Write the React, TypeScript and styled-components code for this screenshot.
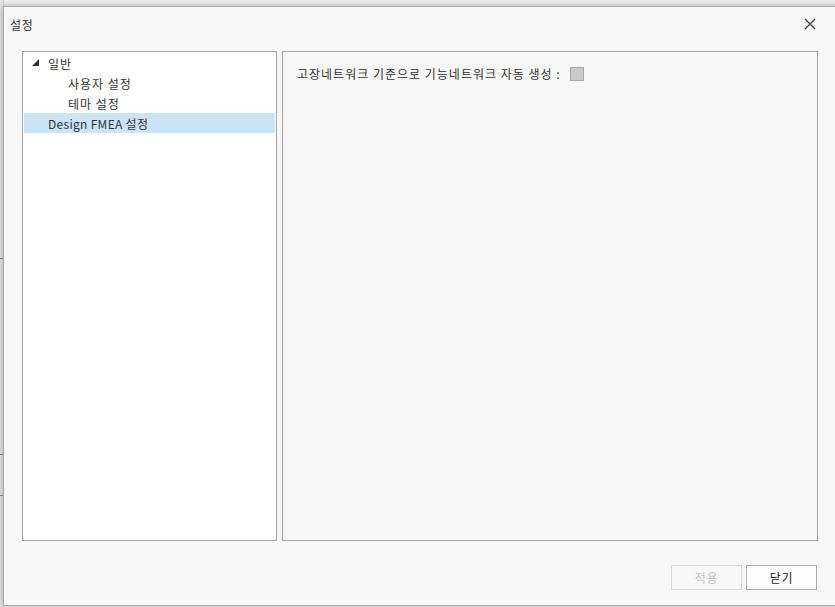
import React from "react";
import styled, { createGlobalStyle } from "styled-components";

const Global = createGlobalStyle`
  html, body { margin: 0; padding: 0; }
  body {
    background: #ececec;
    overflow: hidden;
    width: 835px;
    height: 607px;
    font-family: "Noto Sans CJK KR", "Noto Sans", sans-serif;
    font-size: 12px;
    color: #333;
  }
`;

const Page = styled.div`
  position: relative;
  width: 835px;
  height: 607px;
  overflow: hidden;
  padding: 6px 0 0 3px;
  box-sizing: border-box;
`;

const BackStrip = styled.div`
  position: absolute;
  left: 0;
  top: 0;
  width: 3px;
  height: 607px;
  background: #e4e4e4;
  border-right: 1px solid #c8c8c8;
`;

const BackLine = styled.div<{ $top: number }>`
  position: absolute;
  left: 0;
  top: ${(p) => p.$top}px;
  width: 3px;
  height: 1px;
  background: #888;
`;

const Window = styled.div`
  position: relative;
  width: 840px;
  height: 600px;
  box-sizing: border-box;
  background: #f8f8f8;
  border: 1px solid #a9a9a9;
  box-shadow: 0 0 6px rgba(0, 0, 0, 0.28);
  display: flex;
  flex-direction: column;
`;

const TitleBar = styled.div`
  height: 33px;
  display: flex;
  align-items: center;
  justify-content: space-between;
  padding: 0 18px 0 6px;
  width: 831px;
  box-sizing: border-box;
`;

const Title = styled.span`
  font-size: 12px;
  color: #333;
  margin-top: 1px;
  letter-spacing: 0.6px;
`;

const CloseButton = styled.button`
  border: none;
  background: transparent;
  padding: 0;
  width: 14px;
  height: 14px;
  display: flex;
  align-items: center;
  justify-content: center;
  cursor: pointer;
`;

const Body = styled.div`
  display: flex;
  gap: 5px;
  padding: 11px 0 0 18px;
`;

const Panel = styled.div<{ $width: number; $bg: string }>`
  width: ${(p) => p.$width}px;
  height: 490px;
  box-sizing: border-box;
  border: 1px solid #a5a5a5;
  background: ${(p) => p.$bg};
`;

const Tree = styled.div`
  display: flex;
  flex-direction: column;
  padding: 1px 1px 0 1px;
`;

const TreeRow = styled.div<{ $indent: number; $selected?: boolean; $spacing?: number }>`
  height: 20px;
  display: flex;
  align-items: center;
  padding-left: ${(p) => p.$indent}px;
  background: ${(p) => (p.$selected ? "#cce4f7" : "transparent")};
  color: #333;
  white-space: nowrap;
  letter-spacing: ${(p) => p.$spacing ?? 1}px;
`;

const Expander = styled.span`
  width: 16px;
  display: inline-flex;
  align-items: center;
  margin-left: 8px;
  margin-top: -2px;
`;

const Settings = styled.div`
  padding: 13px 0 0 14px;
  display: flex;
  align-items: center;
  gap: 9px;
`;

const Label = styled.span`
  color: #333;
  white-space: nowrap;
  letter-spacing: 1px;
`;

const CheckBox = styled.span`
  width: 14px;
  height: 14px;
  box-sizing: border-box;
  border: 1px solid #a8a8a8;
  background: #cacaca;
  display: inline-block;
  margin-top: 1px;
`;

const Footer = styled.div`
  display: flex;
  justify-content: flex-end;
  gap: 4px;
  width: 831px;
  box-sizing: border-box;
  padding: 24px 18px 0 0;
`;

const Button = styled.button<{ $disabled?: boolean }>`
  width: 71px;
  height: 25px;
  box-sizing: border-box;
  border: 1px solid ${(p) => (p.$disabled ? "#d9d9d9" : "#acacac")};
  background: ${(p) => (p.$disabled ? "#f8f8f8" : "#fdfdfd")};
  color: ${(p) => (p.$disabled ? "#c4c4c4" : "#222")};
  font-family: "Noto Sans CJK KR", "Noto Sans", sans-serif;
  font-size: 12px;
  letter-spacing: 0.8px;
  padding: 0;
  cursor: default;
`;

export default function App() {
  return (
    <>
      <Global />
      <Page>
        <BackStrip />
        <BackLine $top={258} />
        <BackLine $top={454} />
        <BackLine $top={495} />
        <Window>
          <TitleBar>
            <Title>설정</Title>
            <CloseButton aria-label="닫기">
              <svg width="12" height="12" viewBox="0 0 12 12">
                <path d="M1 1 L11 11 M11 1 L1 11" stroke="#444" strokeWidth="1.4" fill="none" />
              </svg>
            </CloseButton>
          </TitleBar>
          <Body>
            <Panel $width={255} $bg="#ffffff">
              <Tree>
                <TreeRow $indent={0}>
                  <Expander>
                    <svg width="7" height="7" viewBox="0 0 7 7">
                      <path d="M7 0 L7 7 L0 7 Z" fill="#333" />
                    </svg>
                  </Expander>
                  일반
                </TreeRow>
                <TreeRow $indent={44}>사용자 설정</TreeRow>
                <TreeRow $indent={44}>테마 설정</TreeRow>
                <TreeRow $indent={24} $selected $spacing={0.3}>
                  Design FMEA 설정
                </TreeRow>
              </Tree>
            </Panel>
            <Panel $width={536} $bg="#f7f7f7">
              <Settings>
                <Label>고장네트워크 기준으로 기능네트워크 자동 생성 :</Label>
                <CheckBox />
              </Settings>
            </Panel>
          </Body>
          <Footer>
            <Button $disabled>적용</Button>
            <Button>닫기</Button>
          </Footer>
        </Window>
      </Page>
    </>
  );
}
